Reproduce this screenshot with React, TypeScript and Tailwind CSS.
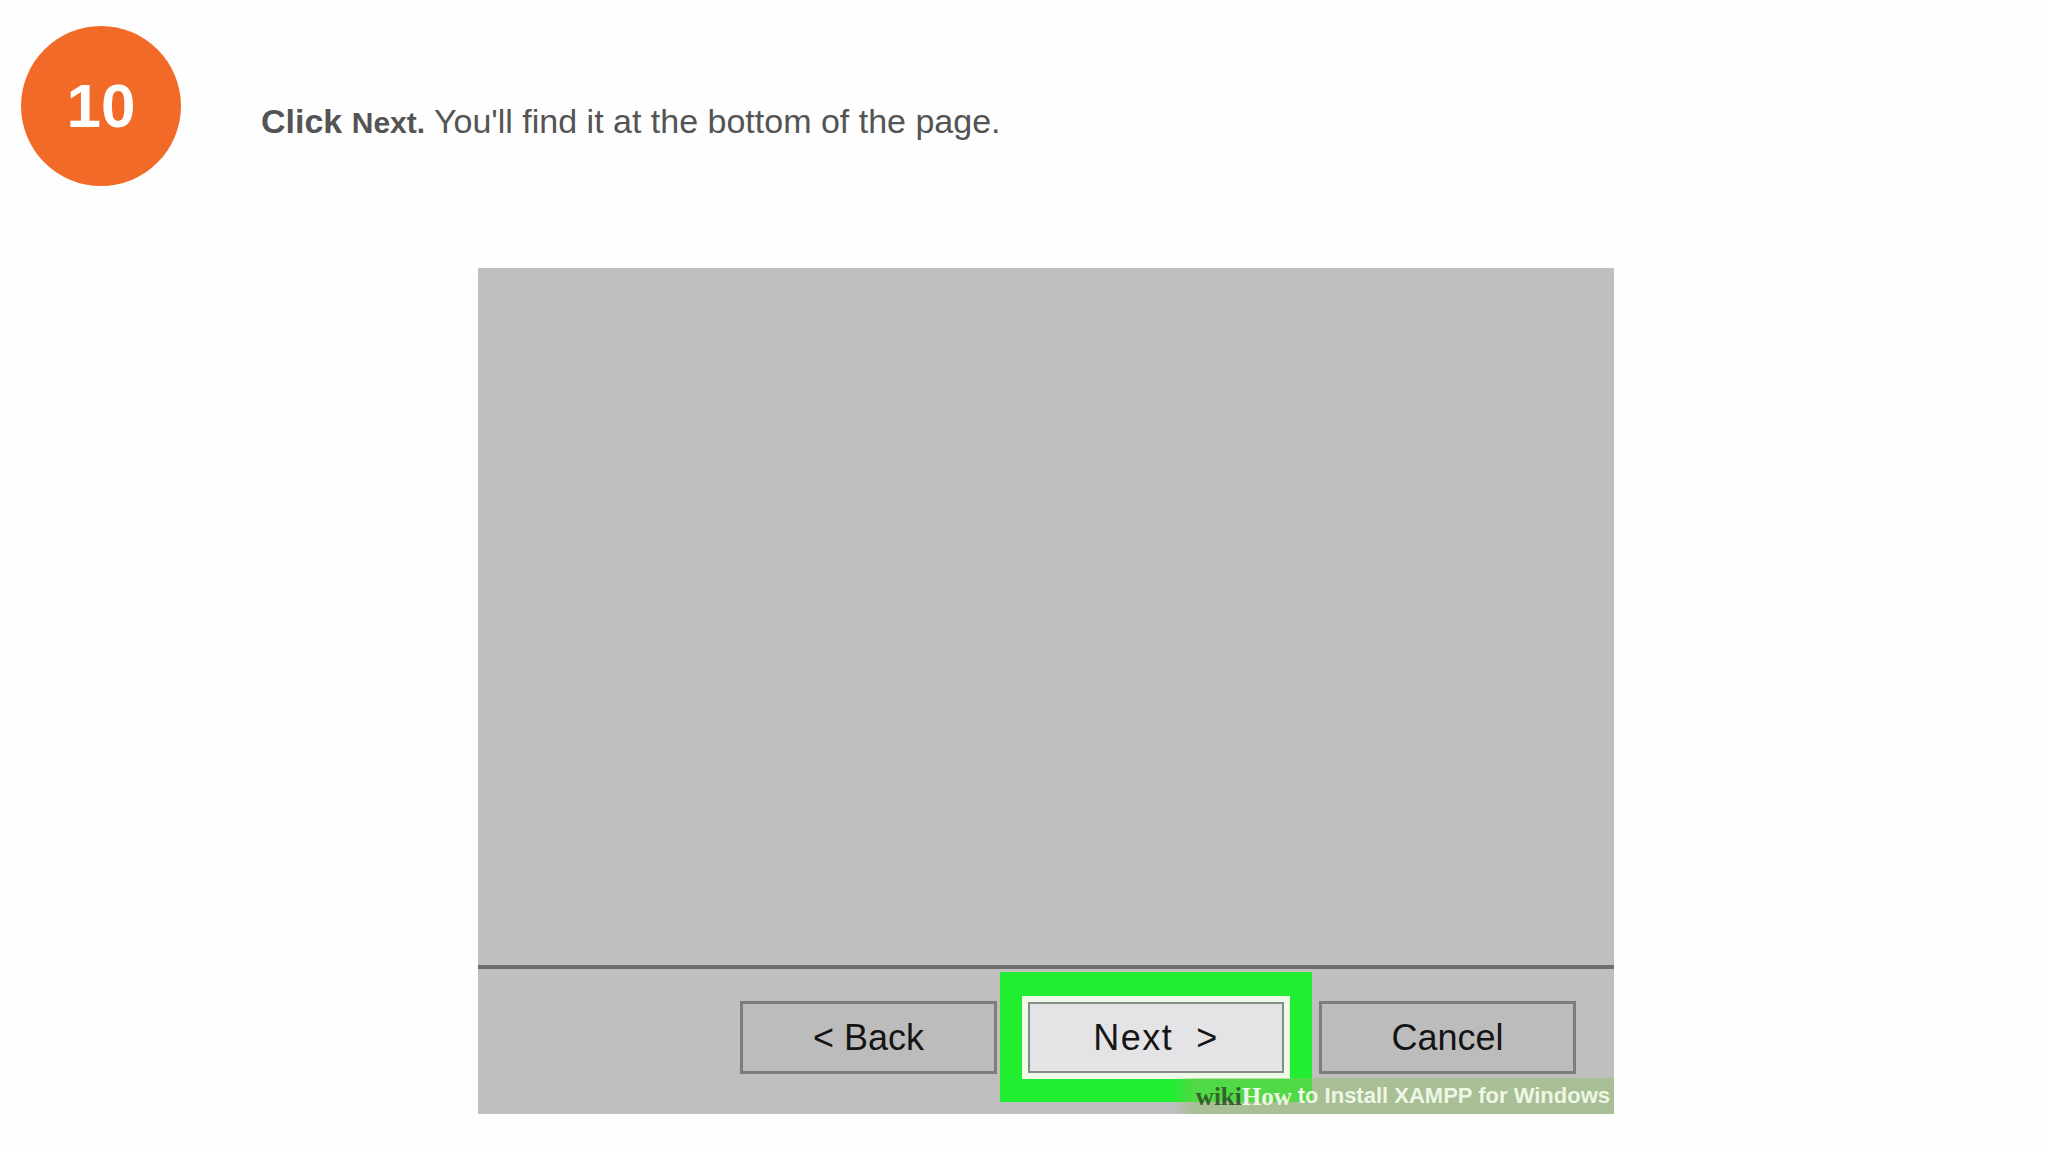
import React from "react";

function StepBadge({ n }: { n: number }) {
  return (
    <div className="flex h-[160px] w-[160px] shrink-0 items-center justify-center rounded-full bg-[#f26a27]">
      <span className="font-['Liberation_Sans',Arial,sans-serif] text-[62px] font-bold leading-none text-white">{n}</span>
    </div>
  );
}

function WinButton({ label }: { label: string }) {
  return (
    <div className="flex h-[73px] w-[257px] items-center justify-center border-[3px] border-[#7d7d7d] bg-[#bdbcbd]">
      <span className="font-['Liberation_Sans',Arial,sans-serif] text-[36px] leading-none text-[#151515]">{label}</span>
    </div>
  );
}

export default function App() {
  return (
    <div className="min-h-[1152px] w-[2048px] bg-[#fefefe] font-['Liberation_Sans',Arial,sans-serif]">
      {/* Step header */}
      <div className="flex items-start pl-[21px] pt-[26px]">
        <StepBadge n={10} />
        <p className="ml-[80px] mt-[78px] text-[34px] leading-none text-[#545454]">
          <b className="font-bold">Click</b> <b className="text-[30px] font-bold">Next.</b> You'll find it at the bottom of the page.
        </p>
      </div>

      {/* Screenshot of installer */}
      <div className="relative ml-[478px] mt-[82px] flex h-[846px] w-[1136px] flex-col bg-[#c0bfbf]">
        <div className="flex-1" />
        <div className="h-[4px] bg-[#6f6f6f]" />
        <div className="flex h-[145px] items-start pl-[262px]">
          <div className="mt-[32px]">
            <WinButton label="< Back" />
          </div>

          {/* highlighted Next */}
          <div className="relative z-10 ml-[3px] mt-[3px] bg-[#21ee30] pb-[23px] pl-[22px] pr-[22px] pt-[24px]">
            <div className="border-[6px] border-[#eefbe8]">
              <div className="flex h-[71px] w-[256px] items-center justify-center border-[2px] border-[#8a8a8a] bg-[#e4e3e6]">
                <span className="text-[36px] leading-none tracking-[1.5px] text-[#151515]">Next&nbsp; &gt;</span>
              </div>
            </div>
          </div>

          <div className="ml-[7px] mt-[32px]">
            <WinButton label="Cancel" />
          </div>
        </div>

        {/* watermark */}
        <div className="absolute bottom-0 right-0 z-20 flex h-[36px] w-[442px] items-center justify-end bg-[linear-gradient(90deg,rgba(140,190,100,0)_0px,rgba(140,190,100,0.45)_22px)] pr-[4px]">
          <span className="font-['Liberation_Serif',serif] text-[25px] font-bold leading-none text-[#36612a]">wiki</span>
          <span className="font-['Liberation_Serif',serif] text-[25px] font-bold leading-none text-[#eef6e4]">How</span>
          <span className="ml-[6px] text-[22px] font-bold leading-none text-[#eef6e4]">to Install XAMPP for Windows</span>
        </div>
      </div>
    </div>
  );
}
